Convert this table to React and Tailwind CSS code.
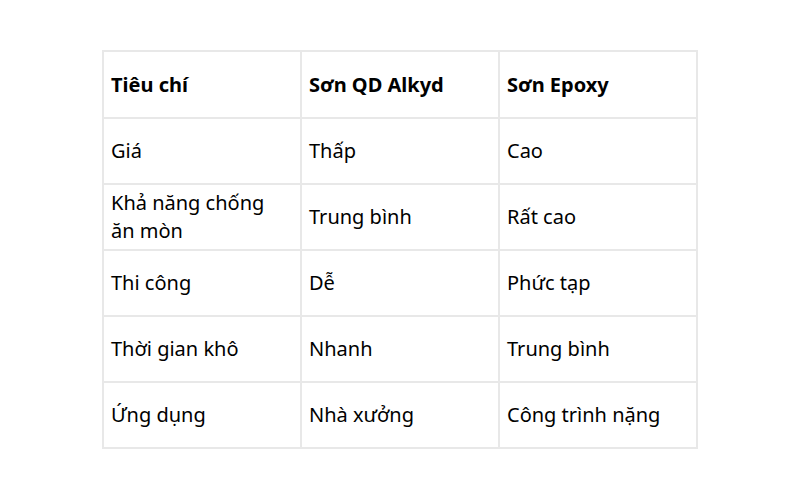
const rows = [
  ['Giá', 'Thấp', 'Cao'],
  ['Khả năng chống ăn mòn', 'Trung bình', 'Rất cao'],
  ['Thi công', 'Dễ', 'Phức tạp'],
  ['Thời gian khô', 'Nhanh', 'Trung bình'],
  ['Ứng dụng', 'Nhà xưởng', 'Công trình nặng'],
];

export default function App() {
  return (
    <div className="flex h-[500px] w-[800px] justify-center bg-white pt-[50px] font-['Noto_Sans',sans-serif] text-[20px] leading-[28px] text-black">
      <table className="h-[397px] w-[596px] table-fixed border-collapse">
        <thead>
          <tr className="h-[67px]">
            {['Tiêu chí', 'Sơn QD Alkyd', 'Sơn Epoxy'].map((h) => (
              <th key={h} className="border-2 border-[#e8e8e8] px-[7px] text-left align-middle font-bold">
                {h}
              </th>
            ))}
          </tr>
        </thead>
        <tbody>
          {rows.map((r) => (
            <tr key={r[0]} className="h-[66px]">
              {r.map((c, i) => (
                <td key={i} className="border-2 border-[#e8e8e8] px-[7px] align-middle">
                  {c}
                </td>
              ))}
            </tr>
          ))}
        </tbody>
      </table>
    </div>
  );
}
